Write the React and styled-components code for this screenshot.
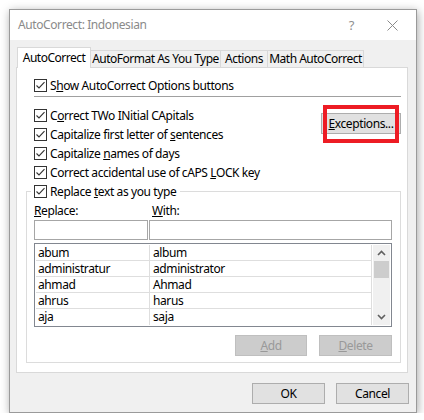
import styled, { createGlobalStyle } from 'styled-components';

const GlobalStyle = createGlobalStyle`
  html, body {
    margin: 0;
    padding: 0;
    background: #ffffff;
  }
  body {
    font-family: "Noto Sans", "Open Sans", sans-serif;
    font-size: 12px;
    letter-spacing: -0.4px;
    color: #000;
  }
`;

const entries = [
  ['abum', 'album'],
  ['administratur', 'administrator'],
  ['ahmad', 'Ahmad'],
  ['ahrus', 'harus'],
  ['aja', 'saja'],
];

const tabs = [
  { label: 'AutoCorrect', width: 74, active: true },
  { label: 'AutoFormat As You Type', width: 131 },
  { label: 'Actions', width: 48 },
  { label: 'Math AutoCorrect', width: 97 },
];

const Page = styled.div`
  padding: 9px 0 0 9px;
`;

const Dialog = styled.div`
  width: 408px;
  box-sizing: border-box;
  border: 1px solid #9a9a9a;
  background: #f0f0f0;
  box-shadow: 1px 2px 9px rgba(0, 0, 0, 0.35);
  display: flex;
  flex-direction: column;
`;

const TitleBar = styled.div`
  height: 30px;
  background: #ffffff;
  display: flex;
  align-items: center;
  padding: 0 18px 0 8px;
  color: #8a8a8a;
  line-height: 16px;
`;

const Title = styled.div`
  flex: 1;
`;

const Help = styled.span`
  font-size: 13px;
  color: #909090;
  margin-right: 33px;
`;

const Body = styled.div`
  padding: 7px 7px 8px 6px;
  display: flex;
  flex-direction: column;
`;

const TabStrip = styled.div`
  display: flex;
  align-items: flex-end;
  padding-left: 1px;
`;

const Tab = styled.div`
  box-sizing: border-box;
  width: ${({ $w }) => $w}px;
  height: ${({ $active }) => ($active ? 21 : 17)}px;
  margin-left: ${({ $active }) => ($active ? 0 : -1)}px;
  margin-bottom: ${({ $active }) => ($active ? -1 : 0)}px;
  padding-top: ${({ $active }) => ($active ? 2 : 0)}px;
  border: 1px solid #d9d9d9;
  border-bottom: none;
  background: ${({ $active }) => ($active ? '#ffffff' : '#f0f0f0')};
  position: relative;
  z-index: ${({ $active }) => ($active ? 1 : 0)};
  display: flex;
  justify-content: center;
  align-items: ${({ $active }) => ($active ? 'flex-start' : 'center')};
  line-height: 16px;
  white-space: nowrap;
  letter-spacing: -0.5px;
`;

const Panel = styled.div`
  width: 392px;
  box-sizing: border-box;
  border: 1px solid #d9d9d9;
  background: #ffffff;
  padding: 8px 6px 9px 9px;
  display: flex;
  flex-direction: column;
`;

const Indent = styled.div`
  padding-left: 8px;
  display: flex;
  flex-direction: column;
`;

const Row = styled.label`
  height: 19px;
  display: flex;
  align-items: center;
  gap: 3px;
  line-height: 16px;
  white-space: nowrap;
`;

const Box = styled.span`
  width: 13px;
  height: 13px;
  box-sizing: border-box;
  border: 1px solid #333333;
  background: #ffffff;
  display: flex;
  flex-shrink: 0;
`;

const Separator = styled.div`
  height: 1px;
  margin-top: 1px;
  background: #a0a0a0;
`;

const OptionBlock = styled.div`
  margin-top: 9px;
  display: flex;
  justify-content: space-between;
`;

const Column = styled.div`
  display: flex;
  flex-direction: column;
`;

const ExceptionWrap = styled.div`
  position: relative;
  margin-top: 7px;
  align-self: flex-start;
`;

const Highlight = styled.div`
  position: absolute;
  left: 2px;
  right: 2px;
  top: -8px;
  bottom: -9px;
  border: 4px solid #ed1c24;
  pointer-events: none;
`;

const Button = styled.button`
  box-sizing: border-box;
  width: ${({ $w }) => $w}px;
  height: ${({ $h }) => $h || 21}px;
  border: 1px solid ${({ disabled }) => (disabled ? '#bfbfbf' : '#adadad')};
  background: ${({ disabled }) => (disabled ? '#cccccc' : '#e1e1e1')};
  color: ${({ disabled }) => (disabled ? '#999999' : '#000000')};
  font-family: inherit;
  font-size: 12px;
  letter-spacing: inherit;
  line-height: 16px;
  padding: 0;
  display: flex;
  align-items: center;
  justify-content: center;
`;

const Group = styled.fieldset`
  margin: 0;
  padding: 0 8px 6px 7px;
  border: 1px solid #dcdcdc;
  display: flex;
  flex-direction: column;
  min-width: 0;
`;

const Legend = styled.legend`
  margin-left: -3px;
  padding: 0 4px 0 3px;
`;

const LabelGrid = styled.div`
  margin-top: 2px;
  display: grid;
  grid-template-columns: 114px 243px;
  column-gap: 1px;
  line-height: 16px;
`;

const FieldLabel = styled.span`
  padding-left: ${({ $pad }) => $pad || 0}px;
`;

const InputGrid = styled.div`
  margin-top: 1px;
  display: grid;
  grid-template-columns: 114px 243px;
  column-gap: 1px;
`;

const TextBox = styled.input`
  box-sizing: border-box;
  height: 20px;
  border: 1px solid #a6a6a6;
  background: #ffffff;
  margin: 0;
  padding: 0 3px;
  font-family: inherit;
  font-size: 12px;
  outline: none;
`;

const List = styled.div`
  margin-top: 3px;
  width: 358px;
  box-sizing: border-box;
  border: 1px solid #828790;
  padding: 1px;
  display: flex;
`;

const Table = styled.div`
  flex: 1;
  display: grid;
  grid-template-columns: 114px 222px;
  grid-auto-rows: 16px;
`;

const Cell = styled.div`
  box-sizing: border-box;
  border-right: 1px solid #dedede;
  border-bottom: ${({ $last }) => ($last ? 'none' : '1px solid #dedede')};
  padding-left: ${({ $first }) => ($first ? 2 : 3)}px;
  line-height: 16px;
  white-space: nowrap;
  overflow: hidden;
`;

const ScrollBar = styled.div`
  width: 17px;
  background: #f0f0f0;
  display: flex;
  flex-direction: column;
  align-items: center;
`;

const Arrow = styled.div`
  height: 16px;
  display: flex;
  align-items: center;
  justify-content: center;
`;

const Thumb = styled.div`
  width: 15px;
  height: 17px;
  background: #cdcdcd;
`;

const Track = styled.div`
  flex: 1;
`;

const ActionRow = styled.div`
  margin-top: 8px;
  display: flex;
  justify-content: flex-end;
  gap: 12px;
`;

const Footer = styled.div`
  margin-top: 10px;
  display: flex;
  justify-content: flex-end;
  gap: 11px;
`;

const Check = () => (
  <Box>
    <svg width="11" height="11" viewBox="0 0 11 11">
      <path d="M1.5 5.5 L4 8 L9.5 2.2" fill="none" stroke="#333" strokeWidth="1.1" />
    </svg>
  </Box>
);

const Option = ({ children }) => (
  <Row>
    <Check />
    <span>{children}</span>
  </Row>
);

const Chevron = ({ up }) => (
  <svg width="9" height="6" viewBox="0 0 9 6">
    <path
      d={up ? 'M1 5 L4.5 1.5 L8 5' : 'M1 1 L4.5 4.5 L8 1'}
      fill="none"
      stroke="#606060"
      strokeWidth="1.6"
    />
  </svg>
);

export default function App() {
  return (
    <Page>
      <GlobalStyle />
      <Dialog>
        <TitleBar>
          <Title>AutoCorrect: Indonesian</Title>
          <Help>?</Help>
          <svg width="11" height="11" viewBox="0 0 11 11">
            <path d="M0.5 0.5 L10.5 10.5 M10.5 0.5 L0.5 10.5" stroke="#8a8a8a" strokeWidth="1" />
          </svg>
        </TitleBar>
        <Body>
          <TabStrip>
            {tabs.map((t) => (
              <Tab key={t.label} $w={t.width} $active={t.active}>
                {t.label}
              </Tab>
            ))}
          </TabStrip>
          <Panel>
            <Indent>
              <Option>
                S<u>h</u>ow AutoCorrect Options buttons
              </Option>
              <Separator />
              <OptionBlock>
                <Column>
                  <Option>
                    C<u>o</u>rrect TWo INitial CApitals
                  </Option>
                  <Option>
                    Capitalize first letter of <u>s</u>entences
                  </Option>
                  <Option>
                    Capitalize <u>n</u>ames of days
                  </Option>
                  <Option>
                    Correct accidental use of cAPS <u>L</u>OCK key
                  </Option>
                </Column>
                <ExceptionWrap>
                  <Button $w={80} $h={21}>
                    <u>E</u>xceptions...
                  </Button>
                  <Highlight />
                </ExceptionWrap>
              </OptionBlock>
            </Indent>
            <Group>
              <Legend>
                <Option>
                  Replace <u>t</u>ext as you type
                </Option>
              </Legend>
              <LabelGrid>
                <FieldLabel>
                  <u>R</u>eplace:
                </FieldLabel>
                <FieldLabel $pad={3}>
                  <u>W</u>ith:
                </FieldLabel>
              </LabelGrid>
              <InputGrid>
                <TextBox />
                <TextBox />
              </InputGrid>
              <List>
                <Table>
                  {entries.map(([from, to], i) => [
                    <Cell key={from + 'a'} $first $last={i === entries.length - 1}>
                      {from}
                    </Cell>,
                    <Cell key={from + 'b'} $last={i === entries.length - 1}>
                      {to}
                    </Cell>,
                  ])}
                </Table>
                <ScrollBar>
                  <Arrow>
                    <Chevron up />
                  </Arrow>
                  <Thumb />
                  <Track />
                  <Arrow>
                    <Chevron />
                  </Arrow>
                </ScrollBar>
              </List>
              <ActionRow>
                <Button $w={72} disabled>
                  <u>A</u>dd
                </Button>
                <Button $w={73} disabled>
                  <u>D</u>elete
                </Button>
              </ActionRow>
            </Group>
          </Panel>
          <Footer>
            <Button $w={73}>OK</Button>
            <Button $w={73}>Cancel</Button>
          </Footer>
        </Body>
      </Dialog>
    </Page>
  );
}
